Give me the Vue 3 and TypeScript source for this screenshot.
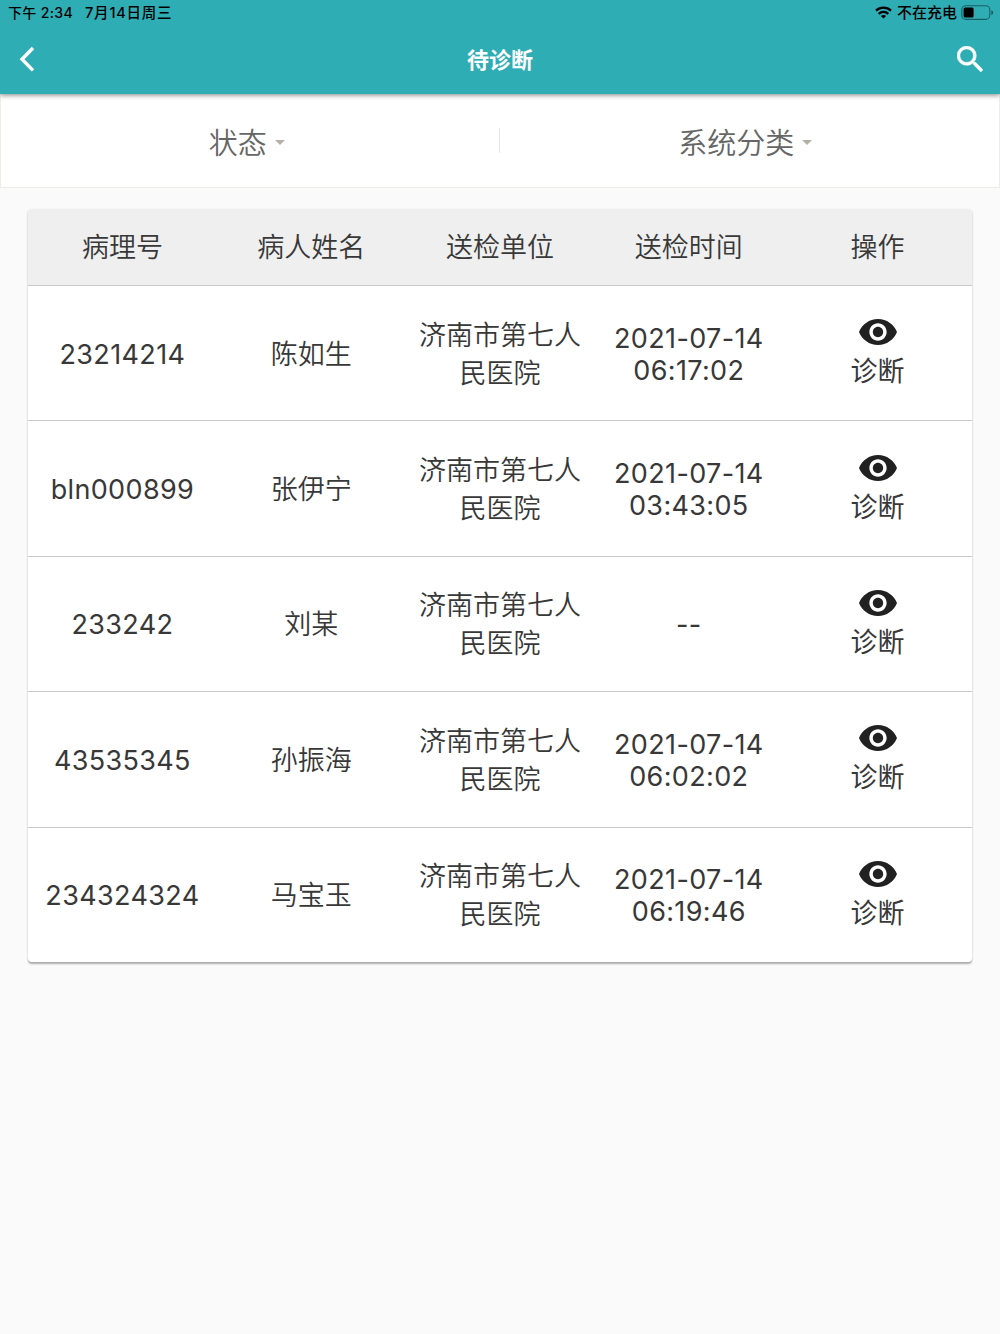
<script setup lang="ts">
interface Row {
  id: string
  name: string
  time: string[]
}

const headers: string[] = ['病理号', '病人姓名', '送检单位', '送检时间', '操作']
const hospital: string[] = ['济南市第七人', '民医院']
const rows: Row[] = [
  { id: '23214214', name: '陈如生', time: ['2021-07-14', '06:17:02'] },
  { id: 'bln000899', name: '张伊宁', time: ['2021-07-14', '03:43:05'] },
  { id: '233242', name: '刘某', time: ['--'] },
  { id: '43535345', name: '孙振海', time: ['2021-07-14', '06:02:02'] },
  { id: '234324324', name: '马宝玉', time: ['2021-07-14', '06:19:46'] },
]
</script>

<template>
  <div class="page">
    <header class="top">
      <div class="status">
        <span class="clock">下午 2:34</span>
        <span class="date">7月14日周三</span>
        <svg class="wifi" width="17" height="13" viewBox="0 0 17 13">
          <g fill="none" stroke="#000" stroke-width="2.3">
            <path d="M1 4.7C5.2.7 11.8.7 16 4.7" />
            <path d="M3.7 7.8c2.7-2.5 6.9-2.5 9.6 0" />
          </g>
          <path d="M8.5 12.5 5.9 9.9c1.4-1.3 3.8-1.3 5.2 0z" />
        </svg>
        <span class="charge">不在充电</span>
        <svg class="battery" width="33" height="16" viewBox="0 0 33 16">
          <rect x="0.8" y="0.8" width="28" height="13.6" rx="4" fill="none" stroke="#000" stroke-opacity=".45" stroke-width="1.1" />
          <rect x="2.6" y="2.6" width="10" height="10" rx="1.5" />
          <path d="M30.4 5.3c2.3.7 2.3 4 0 4.7z" fill-opacity=".5" />
        </svg>
      </div>
      <div class="nav">
        <svg class="back" width="16" height="26" viewBox="0 0 16 26">
          <path d="M14 2 3 13.2l11 11.2" fill="none" stroke="#fff" stroke-width="3.4" />
        </svg>
        <h1>待诊断</h1>
        <svg class="search" width="26" height="26" viewBox="3 3 17.49 17.49">
          <path fill="#fff" stroke="#fff" stroke-width=".3" d="M15.5 14h-.79l-.28-.27A6.471 6.471 0 0 0 16 9.5 6.5 6.5 0 1 0 9.5 16c1.61 0 3.09-.59 4.23-1.57l.27.28v.79l5 4.99L20.49 19l-4.99-5zm-6 0C7.01 14 5 11.99 5 9.5S7.01 5 9.5 5 14 7.01 14 9.5 11.99 14 9.5 14z" />
        </svg>
      </div>
    </header>

    <div class="filters">
      <div class="filter">状态<i class="caret"></i></div>
      <div class="divider"></div>
      <div class="filter">系统分类<i class="caret"></i></div>
    </div>

    <main class="card">
      <div class="row head">
        <div v-for="h in headers" :key="h" class="cell"><span>{{ h }}</span></div>
      </div>
      <div v-for="r in rows" :key="r.id" class="row">
        <div class="cell num"><span>{{ r.id }}</span></div>
        <div class="cell"><span>{{ r.name }}</span></div>
        <div class="cell"><span v-for="p in hospital" :key="p">{{ p }}</span></div>
        <div class="cell num time"><span v-for="t in r.time" :key="t">{{ t }}</span></div>
        <div class="cell action">
          <svg width="38" height="26" viewBox="1 4.5 22 15" preserveAspectRatio="none">
            <path fill="#212121" d="M12 4.5C7 4.5 2.73 7.61 1 12c1.73 4.39 6 7.5 11 7.5s9.27-3.11 11-7.5c-1.73-4.39-6-7.5-11-7.5zM12 17c-2.76 0-5-2.24-5-5s2.24-5 5-5 5 2.24 5 5-2.24 5-5 5zm0-8c-1.66 0-3 1.34-3 3s1.34 3 3 3 3-1.34 3-3-1.34-3-3-3z" />
          </svg>
          <span>诊断</span>
        </div>
      </div>
    </main>
  </div>
</template>

<style>
body {
  margin: 0;
  background: #fafafa;
}
</style>

<style scoped>
.page {
  width: 1000px;
  height: 1334px;
  overflow: hidden;
  background: #fafafa;
  font-family: Inter, "Noto Sans CJK SC", sans-serif;
}
.top {
  position: relative;
  height: 94px;
  background: #2fadb5;
  box-shadow: 0 1px 5px rgba(0, 0, 0, 0.5);
}
.status {
  display: flex;
  align-items: center;
  height: 25px;
  padding: 0 6px 0 8px;
  font-size: 14px;
  font-weight: 500;
  line-height: 24px;
  white-space: nowrap;
  color: #000;
}
.clock {
  width: 77px;
  letter-spacing: 0.35px;
}
.date {
  font-size: 14.5px;
  letter-spacing: 0.8px;
}
.wifi {
  margin-left: auto;
}
.charge {
  margin: 0 4px 0 5px;
  font-size: 15px;
}
.nav {
  display: flex;
  align-items: center;
  justify-content: space-between;
  height: 68px;
  padding: 0 17px 0 19px;
}
.back {
  margin-right: 10px;
}
h1 {
  margin: 0;
  padding: 2px 2px 0 0;
  font-size: 22px;
  font-weight: 700;
  line-height: 32px;
  color: #fff;
}
.filters {
  box-sizing: border-box;
  display: flex;
  align-items: center;
  height: 94px;
  padding-right: 2px;
  background: #fff;
  border: 1px solid #eeede8;
  border-width: 0 1px 1px;
}
.filter {
  flex: 1;
  display: flex;
  align-items: center;
  justify-content: center;
  padding: 6px 6px 0 0;
  font-size: 29px;
  font-weight: 350;
  line-height: 42px;
  color: #666;
}
.caret {
  margin: -3px 0 0 8px;
  border: 5px solid transparent;
  border-top: 5px solid #b5b1a9;
  border-bottom: 0;
}
.divider {
  width: 1px;
  height: 25px;
  background: #e8e7e0;
}
.card {
  margin: 21px 28px 0;
  overflow: hidden;
  background: #fff;
  border-radius: 4px;
  box-shadow: 0 1.5px 2px rgba(0, 0, 0, 0.32);
}
.row {
  box-sizing: border-box;
  display: flex;
  height: 135.4px;
  border-top: 1px solid #c9c9c9;
}
.head {
  height: 76px;
  border-top: 0;
  background: #efefef;
}
.cell {
  flex: 1 1 0;
  display: flex;
  flex-direction: column;
  align-items: center;
  justify-content: center;
  padding-top: 3px;
  font-size: 27px;
  font-weight: 350;
  line-height: 38px;
  white-space: nowrap;
  color: #383838;
}
.head .cell {
  padding-top: 2px;
}
.num {
  font-weight: 380;
  line-height: 32px;
  letter-spacing: 0.35px;
}
.action {
  padding-top: 4px;
}
.action svg {
  margin-bottom: 8px;
}
.action span {
  font-weight: 400;
  line-height: 38px;
}
</style>
